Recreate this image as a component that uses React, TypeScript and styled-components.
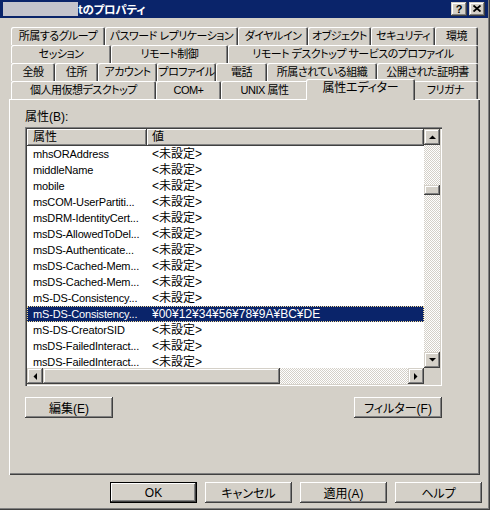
import React from "react";
import styled, { createGlobalStyle, css } from "styled-components";

const FACE = "#d4d0c8";
const SHADOW = "#808080";
const DARK = "#404040";
const NAVY = "#0a246a";

const GlobalStyle = createGlobalStyle`
  html, body { margin: 0; padding: 0; background: #ffffff; }
  body {
    font-family: "Liberation Sans", "Noto Sans CJK JP", sans-serif;
    font-size: 12px;
    color: #000;
    font-feature-settings: "palt";
  }
  * { box-sizing: border-box; }
`;

/* classic 3D edges */
const raisedButton = css`
  box-shadow: inset -1px -1px ${DARK}, inset 1px 1px #fff, inset -2px -2px ${SHADOW},
    inset 2px 2px ${FACE};
`;
const raisedScroll = css`
  box-shadow: inset -1px -1px ${DARK}, inset 1px 1px ${FACE}, inset -2px -2px ${SHADOW},
    inset 2px 2px #fff;
`;
const dither = css`
  background-color: #fff;
  background-image: repeating-conic-gradient(${FACE} 0 25%, #fff 0 50%);
  background-size: 2px 2px;
`;

const Window = styled.div`
  width: 490px;
  height: 510px;
  background: ${FACE};
  display: flex;
  flex-direction: column;
  box-shadow: inset -1px -1px ${DARK}, inset -2px -2px ${SHADOW};
`;

const TitleBar = styled.div`
  height: 18px;
  margin-right: 2px;
  background: ${NAVY};
  display: flex;
  align-items: center;
  padding: 0 3px 0 3px;
`;

const Redacted = styled.span`
  width: 75px;
  height: 14px;
  background: #c4c4cc;
`;

const TitleText = styled.span`
  color: #fff;
  font-weight: bold;
  font-size: 11.5px;
  line-height: 18px;
  letter-spacing: -0.3px;
  font-family: "Noto Sans CJK JP", sans-serif;
`;

const CaptionButtons = styled.div`
  margin-left: auto;
  display: flex;
  gap: 2px;
`;

const CaptionButton = styled.div`
  width: 16px;
  height: 14px;
  background: ${FACE};
  ${raisedScroll};
  display: flex;
  align-items: center;
  justify-content: center;
  font: bold 11px "Liberation Sans", sans-serif;
  line-height: 14px;
  padding-bottom: 1px;
`;

const Body = styled.div`
  flex: 1;
  display: flex;
  flex-direction: column;
  padding: 9px 8px 0 9px;
`;

const TabStrip = styled.div`
  display: flex;
  flex-direction: column;
  padding-left: 2px;
`;

const TabRow = styled.div`
  display: flex;
  height: 18px;
  align-items: flex-start;
`;

const Tab = styled.div<{ $w: number; $active?: boolean }>`
  flex: none;
  width: ${(p) => p.$w + (p.$active ? 4 : 0)}px;
  height: ${(p) => (p.$active ? 21 : 18)}px;
  margin: ${(p) => (p.$active ? "-2px -2px 0 -2px" : "0")};
  position: relative;
  z-index: ${(p) => (p.$active ? 2 : 0)};
  background: ${FACE};
  border-radius: 2px 2px 0 0;
  box-shadow: inset 1px 1px #fff, inset -1px 0 ${DARK}, inset -2px 0 ${SHADOW};
  text-align: center;
  line-height: 18px;
  font-size: ${(p) => (p.$active ? 12 : 11)}px;
  letter-spacing: ${(p) => (p.$active ? -0.2 : -0.5)}px;
  white-space: nowrap;
`;

const Panel = styled.div`
  width: 471px;
  height: 376px;
  background: ${FACE};
  box-shadow: inset 1px 1px #fff, inset -1px -1px ${DARK}, inset -2px -2px ${SHADOW};
  padding: 10px 0 0 16px;
  display: flex;
  flex-direction: column;
`;

const FieldLabel = styled.div`
  height: 16px;
  line-height: 16px;
`;

const ListBox = styled.div`
  margin-top: 2px;
  width: 417px;
  height: 259px;
  padding: 2px;
  box-shadow: inset 1px 1px ${SHADOW}, inset 2px 2px ${DARK}, inset -1px -1px #fff,
    inset -2px -2px ${FACE};
  display: grid;
  grid-template-columns: 397px 16px;
  grid-template-rows: 239px 16px;
`;

const View = styled.div`
  background: #fff;
  overflow: hidden;
  display: flex;
  flex-direction: column;
`;

const Header = styled.div`
  display: flex;
  height: 17px;
  flex: none;
`;

const HeaderCell = styled.div<{ $w?: number }>`
  ${(p) => (p.$w ? `width: ${p.$w}px; flex: none;` : "flex: 1;")}
  background: ${FACE};
  box-shadow: inset -1px -1px ${DARK}, inset 1px 1px #fff, inset -2px -2px ${SHADOW};
  line-height: 17px;
  padding-left: ${(p) => (p.$w ? 6 : 5)}px;
`;

const Row = styled.div<{ $selected?: boolean }>`
  display: flex;
  height: 16px;
  flex: none;
  line-height: 16px;
  background: ${(p) => (p.$selected ? NAVY : "#fff")};
  color: ${(p) => (p.$selected ? "#fff" : "#000")};
  outline: ${(p) => (p.$selected ? "1px dotted #f5db95" : "none")};
  outline-offset: -1px;
`;

const NameCell = styled.div`
  width: 120px;
  flex: none;
  padding: 0 0 0 6px;
  white-space: nowrap;
  overflow: hidden;
  font-size: 11px;
  letter-spacing: -0.15px;
`;

const ValueCell = styled.div`
  flex: 1;
  padding-left: 5px;
  white-space: nowrap;
  overflow: hidden;
`;

const VScroll = styled.div`
  display: flex;
  flex-direction: column;
  ${dither};
`;

const HScroll = styled.div`
  display: flex;
  ${dither};
`;

const Corner = styled.div`
  background: ${FACE};
`;

const ArrowButton = styled.div`
  width: 16px;
  height: 16px;
  flex: none;
  background: ${FACE};
  ${raisedScroll};
  display: flex;
  align-items: center;
  justify-content: center;
`;

const VThumb = styled.div<{ $top: number; $h: number }>`
  margin-top: ${(p) => p.$top}px;
  height: ${(p) => p.$h}px;
  background: ${FACE};
  ${raisedScroll};
  flex: none;
`;

const HThumb = styled.div<{ $w: number }>`
  width: ${(p) => p.$w}px;
  background: ${FACE};
  ${raisedScroll};
  flex: none;
`;

const Spacer = styled.div`
  flex: 1;
`;

const ButtonRow = styled.div`
  margin-top: 11px;
  width: 417px;
  display: flex;
  justify-content: space-between;
`;

const PushButton = styled.div<{ $default?: boolean }>`
  width: 88px;
  height: 21px;
  background: ${FACE};
  display: flex;
  align-items: center;
  justify-content: center;
  ${(p) =>
    p.$default
      ? css`
          box-shadow: inset 0 0 0 1px #000, inset -2px -2px ${DARK}, inset 2px 2px #fff,
            inset -3px -3px ${SHADOW};
        `
      : raisedButton};
`;

const DialogButtons = styled.div`
  margin-top: 7px;
  display: flex;
  justify-content: flex-end;
  gap: 8px;
`;

const DialogButton = styled(PushButton)`
  width: 87px;
`;

type Dir = "up" | "down" | "left" | "right";
const arrowPoints: Record<Dir, string> = {
  up: "0,4 7,4 3.5,0.5",
  down: "0,0 7,0 3.5,3.5",
  left: "4,0 4,7 0.5,3.5",
  right: "0,0 0,7 3.5,3.5",
};

function Arrow({ dir }: { dir: Dir }) {
  const vertical = dir === "up" || dir === "down";
  return (
    <svg width={vertical ? 7 : 4} height={vertical ? 4 : 7} viewBox={vertical ? "0 0 7 4" : "0 0 4 7"}>
      <polygon points={arrowPoints[dir]} fill="#000" />
    </svg>
  );
}

const tabRows: { label: string; w: number; active?: boolean }[][] = [
  [
    { label: "所属するグループ", w: 94 },
    { label: "パスワード レプリケーション", w: 133 },
    { label: "ダイヤルイン", w: 70 },
    { label: "オブジェクト", w: 63 },
    { label: "セキュリティ", w: 64 },
    { label: "環境", w: 43 },
  ],
  [
    { label: "セッション", w: 100 },
    { label: "リモート制御", w: 117 },
    { label: "リモート デスクトップ サービスのプロファイル", w: 250 },
  ],
  [
    { label: "全般", w: 44 },
    { label: "住所", w: 43 },
    { label: "アカウント", w: 59 },
    { label: "プロファイル", w: 59 },
    { label: "電話", w: 51 },
    { label: "所属されている組織", w: 110 },
    { label: "公開された証明書", w: 101 },
  ],
  [
    { label: "個人用仮想デスクトップ", w: 145 },
    { label: "COM+", w: 65 },
    { label: "UNIX 属性", w: 87 },
    { label: "属性エディター", w: 105, active: true },
    { label: "フリガナ", w: 65 },
  ],
];

const UNSET = "<未設定>";
const attributes: { name: string; value: string; selected?: boolean }[] = [
  { name: "mhsORAddress", value: UNSET },
  { name: "middleName", value: UNSET },
  { name: "mobile", value: UNSET },
  { name: "msCOM-UserPartiti...", value: UNSET },
  { name: "msDRM-IdentityCert...", value: UNSET },
  { name: "msDS-AllowedToDel...", value: UNSET },
  { name: "msDS-Authenticate...", value: UNSET },
  { name: "msDS-Cached-Mem...", value: UNSET },
  { name: "msDS-Cached-Mem...", value: UNSET },
  { name: "mS-DS-Consistency...", value: UNSET },
  { name: "mS-DS-Consistency...", value: "¥00¥12¥34¥56¥78¥9A¥BC¥DE", selected: true },
  { name: "mS-DS-CreatorSID", value: UNSET },
  { name: "msDS-FailedInteract...", value: UNSET },
  { name: "msDS-FailedInteract...", value: UNSET },
];

export default function App() {
  return (
    <>
      <GlobalStyle />
      <Window>
        <TitleBar>
          <Redacted />
          <TitleText>tのプロパティ</TitleText>
          <CaptionButtons>
            <CaptionButton>?</CaptionButton>
            <CaptionButton>
              <svg width="8" height="7" viewBox="0 0 8 7">
                <path d="M0.5 0.5 L7.5 6.5 M7.5 0.5 L0.5 6.5" stroke="#000" strokeWidth="1.8" />
              </svg>
            </CaptionButton>
          </CaptionButtons>
        </TitleBar>
        <Body>
          <TabStrip>
            {tabRows.map((row, i) => (
              <TabRow key={i}>
                {row.map((t) => (
                  <Tab key={t.label} $w={t.w} $active={t.active}>
                    {t.label}
                  </Tab>
                ))}
              </TabRow>
            ))}
          </TabStrip>
          <Panel>
            <FieldLabel>属性(B):</FieldLabel>
            <ListBox>
              <View>
                <Header>
                  <HeaderCell $w={120}>属性</HeaderCell>
                  <HeaderCell>値</HeaderCell>
                </Header>
                {attributes.map((a, i) => (
                  <Row key={i} $selected={a.selected}>
                    <NameCell>{a.name}</NameCell>
                    <ValueCell>{a.value}</ValueCell>
                  </Row>
                ))}
              </View>
              <VScroll>
                <ArrowButton>
                  <Arrow dir="up" />
                </ArrowButton>
                <VThumb $top={40} $h={10} />
                <Spacer />
                <ArrowButton>
                  <Arrow dir="down" />
                </ArrowButton>
              </VScroll>
              <HScroll>
                <ArrowButton>
                  <Arrow dir="left" />
                </ArrowButton>
                <HThumb $w={237} />
                <Spacer />
                <ArrowButton>
                  <Arrow dir="right" />
                </ArrowButton>
              </HScroll>
              <Corner />
            </ListBox>
            <ButtonRow>
              <PushButton>編集(E)</PushButton>
              <PushButton>フィルター(F)</PushButton>
            </ButtonRow>
          </Panel>
          <DialogButtons>
            <DialogButton $default>OK</DialogButton>
            <DialogButton>キャンセル</DialogButton>
            <DialogButton>適用(A)</DialogButton>
            <DialogButton>ヘルプ</DialogButton>
          </DialogButtons>
        </Body>
      </Window>
    </>
  );
}
